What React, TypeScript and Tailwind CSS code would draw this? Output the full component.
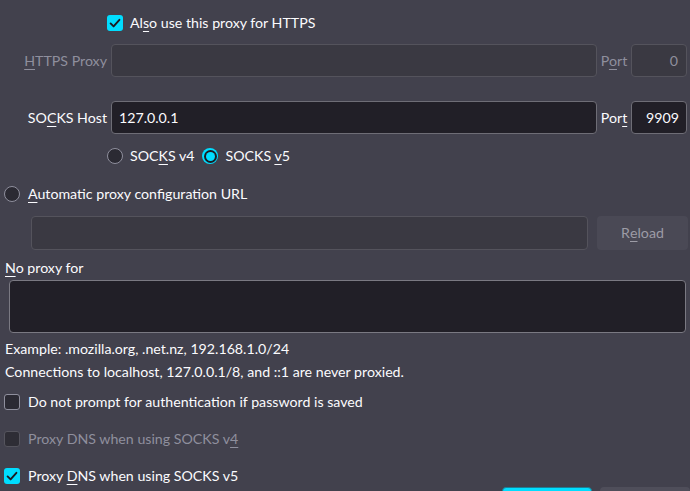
import type { ReactNode } from "react";

const FONT = { fontFamily: "Lato, 'Liberation Sans', sans-serif" };

function Key({ children }: { children: ReactNode }) {
  return <span className="underline decoration-1 underline-offset-[3px]">{children}</span>;
}

function Checkbox({ checked, disabled }: { checked?: boolean; disabled?: boolean }) {
  if (checked) {
    return (
      <span className="flex h-4 w-4 shrink-0 items-center justify-center rounded-[3px] bg-[#00ddff]">
        <svg viewBox="0 0 16 16" className="h-4 w-4" fill="none">
          <path d="M3.6 8.4l3 3 5.8-6.6" stroke="#1c1b22" strokeWidth="1.9" strokeLinecap="round" strokeLinejoin="round" />
        </svg>
      </span>
    );
  }
  return (
    <span
      className={
        disabled
          ? "h-4 w-4 shrink-0 rounded-[3px] border border-[#55545d] bg-[#2e2d35]"
          : "h-4 w-4 shrink-0 rounded-[3px] border border-[#8f8f9d] bg-[#2b2a33]"
      }
    />
  );
}

function Radio({ checked }: { checked?: boolean }) {
  if (checked) {
    return (
      <span className="flex h-4 w-4 shrink-0 items-center justify-center rounded-full bg-[#00ddff]">
        <span className="flex h-[13px] w-[13px] items-center justify-center rounded-full bg-[#1c1b22]">
          <span className="h-[9px] w-[9px] rounded-full bg-[#00ddff]" />
        </span>
      </span>
    );
  }
  return <span className="h-4 w-4 shrink-0 rounded-full border border-[#8f8f9d] bg-[#2b2a33]" />;
}

export default function App() {
  return (
    <div
      className="h-[491px] w-[690px] overflow-hidden bg-[#42414d] text-[14.2px] leading-5 text-[#fbfbfe]"
      style={FONT}
    >
      {/* HTTPS checkbox */}
      <div className="mt-[13px] flex h-5 items-center gap-[7px] pl-[107px]">
        <Checkbox checked />
        <span>
          Al<Key>s</Key>o use this proxy for HTTPS
        </span>
      </div>

      {/* HTTPS proxy (disabled) */}
      <div className="mt-[11px] flex h-[33px] items-center">
        <span className="w-[107px] text-right text-[#8f8f9d]">
          <Key>H</Key>TTPS Proxy
        </span>
        <div className="ml-[4px] h-[33px] w-[486px] rounded-[4px] border border-[#54535c] bg-[#3a3942]" />
        <span className="w-[34px] text-center text-[#8f8f9d]">
          P<Key>o</Key>rt
        </span>
        <div className="flex h-[33px] w-[56px] items-center justify-end rounded-[4px] border border-[#54535c] bg-[#3a3942] px-2 text-[#8f8f9d]">
          0
        </div>
      </div>

      {/* SOCKS host */}
      <div className="mt-[24px] flex h-[33px] items-center">
        <span className="w-[107px] text-right">
          SO<Key>C</Key>KS Host
        </span>
        <div className="ml-[4px] flex h-[33px] w-[486px] items-center rounded-[4px] border border-[#6e6d76] bg-[#211f27] px-[7px]">
          127.0.0.1
        </div>
        <span className="w-[34px] text-center">
          Por<Key>t</Key>
        </span>
        <div className="flex h-[33px] w-[56px] items-center justify-end rounded-[4px] border border-[#6e6d76] bg-[#211f27] px-[7px]">
          9909
        </div>
      </div>

      {/* SOCKS version */}
      <div className="mt-[12px] flex h-5 items-center pl-[107px]">
        <Radio />
        <span className="ml-[7px]">
          SOC<Key>K</Key>S v4
        </span>
        <span className="ml-[8px]">
          <Radio checked />
        </span>
        <span className="ml-[7px]">
          SOCKS <Key>v</Key>5
        </span>
      </div>

      {/* Automatic proxy */}
      <div className="mt-[18px] flex h-5 items-center gap-[8px] pl-[4px]">
        <Radio />
        <span>
          <Key>A</Key>utomatic proxy configuration URL
        </span>
      </div>

      <div className="mt-[12px] flex h-[34px] items-center">
        <div className="ml-[31px] h-[34px] w-[557px] rounded-[4px] border border-[#54535c] bg-[#3a3942]" />
        <div className="ml-[9px] flex h-[34px] w-[91px] items-center justify-center rounded-[4px] bg-[#4a4955] text-[#9d9ca6]">
          R<Key>e</Key>load
        </div>
      </div>

      {/* No proxy for */}
      <div className="mt-[8px] h-5 pl-[5px]">
        <Key>N</Key>o proxy for
      </div>
      <div className="ml-[9px] mt-[2px] h-[53px] w-[677px] rounded-[4px] border border-[#7a7982] bg-[#211f27]" />

      <div className="mt-[6px] h-5 pl-[5px]">Example: .mozilla.org, .net.nz, 192.168.1.0/24</div>
      <div className="mt-[3px] h-5 pl-[5px]">
        Connections to localhost, 127.0.0.1/8, and ::1 are never proxied.
      </div>

      <div className="mt-[10px] flex h-5 items-center gap-[8px] pl-[4px]">
        <Checkbox />
        <span>
          Do not prompt for authent<Key>i</Key>cation if password is saved
        </span>
      </div>
      <div className="mt-[17px] flex h-5 items-center gap-[8px] pl-[4px] text-[#8f8f9d]">
        <Checkbox disabled />
        <span>
          Proxy DNS when using SOCKS v<Key>4</Key>
        </span>
      </div>
      <div className="mt-[17px] flex h-5 items-center gap-[8px] pl-[4px]">
        <Checkbox checked />
        <span>
          Proxy <Key>D</Key>NS when using SOCKS v5
        </span>
      </div>

      {/* dialog buttons (cut off) */}
      <div className="mt-[1px] flex gap-[8px] pl-[502px]">
        <div className="h-8 w-[90px] rounded-[4px] border border-[#1b7f95] bg-[#00ddff]" />
        <div className="h-8 w-[90px] rounded-[4px] bg-[#4f4e5a]" />
      </div>
    </div>
  );
}
